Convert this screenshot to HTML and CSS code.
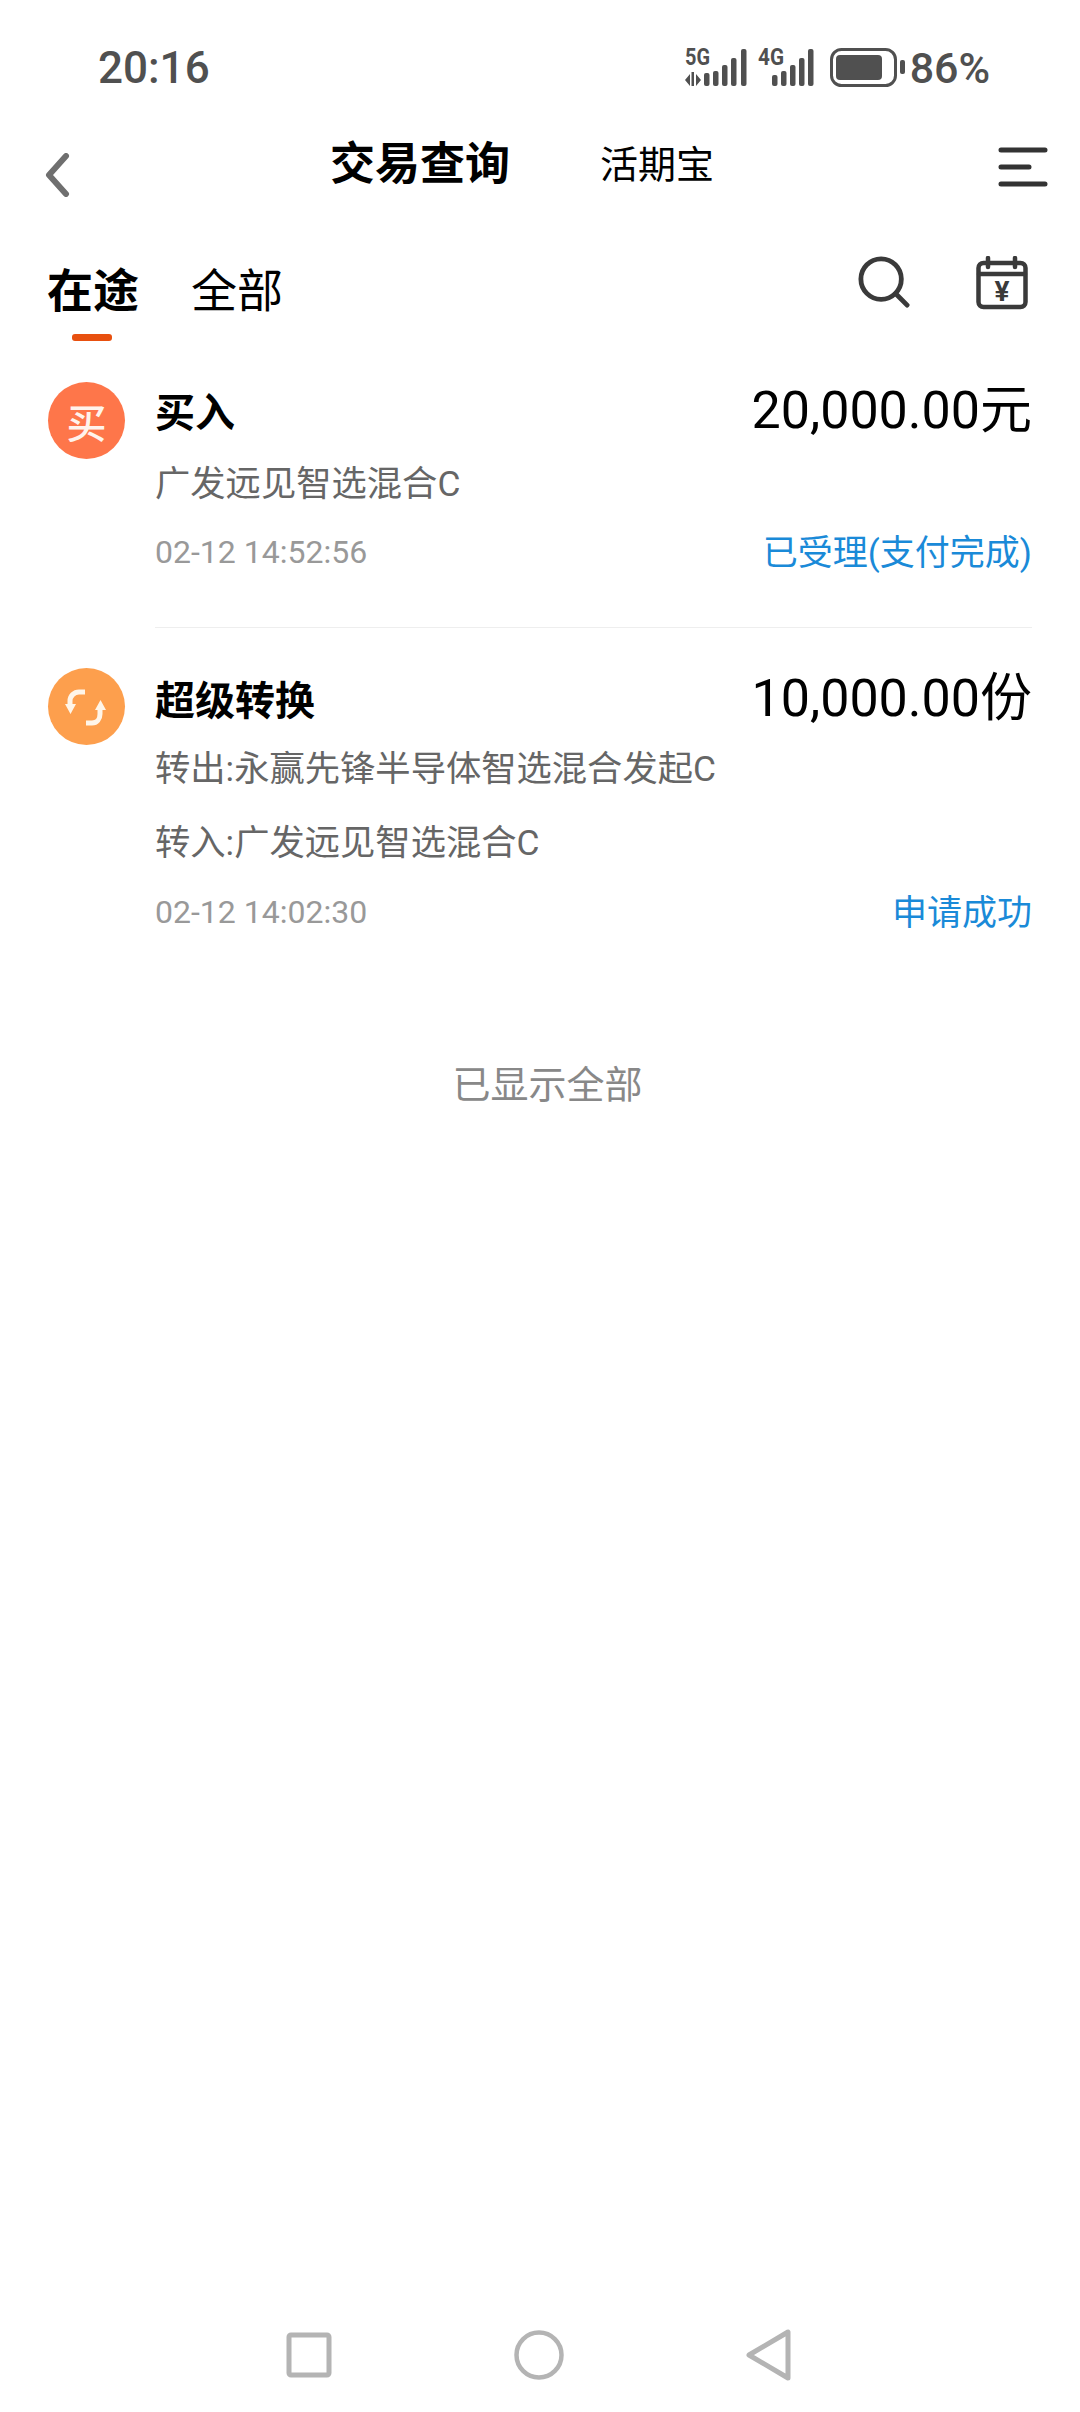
FILE: index.html
```html
<!DOCTYPE html>
<html lang="zh-CN">
<head>
    <meta charset="UTF-8">
    <meta name="viewport" content="width=device-width, initial-scale=1.0">
    <title>交易查询</title>
    <link rel="stylesheet" href="styles.css">
</head>
<body>
    <div class="status-bar">
        <span class="clock">20:16</span>
        <svg class="status-icons" width="220" height="46" viewBox="0 -6 220 46">
            <text x="0" y="17" class="net-label" textLength="25" lengthAdjust="spacingAndGlyphs">5G</text>
            <path d="M0 32l5-6v12zM6.500 24h2.500v14h-2.500zM11 26l5 6-5 6z" fill="#505050"/>
            <g fill="#505050">
                <rect x="19" y="25" width="5.500" height="13" rx="2"/>
                <rect x="28" y="23" width="5.500" height="15" rx="2"/>
                <rect x="37" y="17" width="5.500" height="21" rx="2"/>
                <rect x="46" y="10" width="5.500" height="28" rx="2"/>
                <rect x="56" y="1" width="5.500" height="37" rx="2"/>
            </g>
            <text x="73" y="17" class="net-label" textLength="26" lengthAdjust="spacingAndGlyphs">4G</text>
            <g fill="#505050">
                <rect x="87" y="27" width="5.500" height="11" rx="2"/>
                <rect x="96" y="23" width="5.500" height="15" rx="2"/>
                <rect x="105" y="17" width="5.500" height="21" rx="2"/>
                <rect x="114" y="10" width="5.500" height="28" rx="2"/>
                <rect x="123" y="1" width="5.500" height="37" rx="2"/>
            </g>
            <rect x="146.500" y="1.500" width="64" height="36" rx="10" fill="none" stroke="#505050" stroke-width="3"/>
            <rect x="151" y="7" width="46" height="25" rx="4" fill="#505050"/>
            <rect x="215" y="12" width="5" height="14" rx="2" fill="#505050"/>
        </svg>
        <span class="battery-level">86%</span>
    </div>

    <div class="nav-bar">
        <svg class="back-icon" width="26" height="44" viewBox="0 0 26 44">
            <path d="M21 3L4 22l17 19" fill="none" stroke="#6f6f6f" stroke-width="6" stroke-linecap="round" stroke-linejoin="round"/>
        </svg>
        <h1 class="nav-title">交易查询</h1>
        <span class="nav-link">活期宝</span>
        <svg class="menu-icon" width="50" height="42" viewBox="0 0 50 42">
            <path d="M3 4h44M3 21h28M3 38h44" fill="none" stroke="#333" stroke-width="5" stroke-linecap="round"/>
        </svg>
    </div>

    <div class="tabs">
        <span class="tab active">在途</span>
        <span class="tab">全部</span>
        <div class="tab-tools">
            <svg width="52" height="52" viewBox="0 0 54 54">
                <circle cx="24" cy="24" r="21" fill="none" stroke="#3a3a3a" stroke-width="5"/>
                <path d="M39 39l12 12" fill="none" stroke="#3a3a3a" stroke-width="5" stroke-linecap="round"/>
            </svg>
            <svg width="52" height="54" viewBox="0 0 52 54">
                <rect x="2.500" y="7" width="47" height="44" rx="5" fill="none" stroke="#3a3a3a" stroke-width="4.500"/>
                <path d="M3 18h46M12 2v9M39 2v9" fill="none" stroke="#3a3a3a" stroke-width="4.500" stroke-linecap="round"/>
                <text x="26" y="45" class="yen">¥</text>
            </svg>
        </div>
    </div>

    <div class="trade-list">
        <div class="trade first">
            <div class="trade-icon buy">买</div>
            <div class="trade-body">
                <div class="trade-head">
                    <span class="trade-name">买入</span>
                    <span class="trade-amount">20,000.00元</span>
                </div>
                <div class="trade-fund">广发远见智选混合C</div>
                <div class="trade-meta">
                    <span class="trade-time">02-12 14:52:56</span>
                    <span class="trade-state">已受理(支付完成)</span>
                </div>
            </div>
        </div>
        <div class="trade">
            <div class="trade-icon swap">
                <svg width="77" height="77" viewBox="0 0 77 77">
                    <path d="M37 24h-6c-5 0-9 4-9 9v4M38 55h6c5 0 8-4 8-9v-5" fill="none" stroke="#fff5e8" stroke-width="5"/>
                    <path d="M17 36h11l-5.500 10zM47 42h11l-5.500-10z" fill="#fff5e8"/>
                </svg>
            </div>
            <div class="trade-body">
                <div class="trade-head">
                    <span class="trade-name">超级转换</span>
                    <span class="trade-amount">10,000.00份</span>
                </div>
                <div class="trade-fund">转出:永赢先锋半导体智选混合发起C</div>
                <div class="trade-fund">转入:广发远见智选混合C</div>
                <div class="trade-meta">
                    <span class="trade-time">02-12 14:02:30</span>
                    <span class="trade-state">申请成功</span>
                </div>
            </div>
        </div>
    </div>

    <div class="end-note">已显示全部</div>

    <div class="system-nav">
        <svg width="46" height="46" viewBox="0 0 46 46">
            <rect x="3" y="3" width="40" height="40" rx="2" fill="none" stroke="#b4b4b4" stroke-width="5"/>
        </svg>
        <svg width="50" height="50" viewBox="0 0 50 50">
            <circle cx="25" cy="25" r="22.500" fill="none" stroke="#b4b4b4" stroke-width="4.500"/>
        </svg>
        <svg width="46" height="52" viewBox="0 0 46 52">
            <path d="M42 3v46L3 26z" fill="none" stroke="#b4b4b4" stroke-width="5" stroke-linejoin="round"/>
        </svg>
    </div>
</body>
</html>
```

FILE: styles.css
```css
body {
    margin: 0;
    width: 1080px;
    height: 2412px;
    display: flex;
    flex-direction: column;
    background-color: white;
    font-family: Roboto, "Noto Sans CJK SC", sans-serif;
    color: #000;
    overflow: hidden;
}

.status-bar {
    height: 120px;
    box-sizing: border-box;
    padding: 48px 0 0 98px;
    display: flex;
    align-items: flex-start;
    color: #505050;
}

.clock {
    font-size: 44px;
    font-weight: 500;
    line-height: 40px;
}

.status-icons {
    margin-left: 475px;
    margin-top: -6px;
    flex-shrink: 0;
}

.net-label {
    font-size: 24px;
    font-weight: 700;
    fill: #505050;
}

.battery-level {
    font-size: 43px;
    font-weight: 500;
    line-height: 40px;
    margin-left: 5px;
}

.nav-bar {
    height: 86px;
    display: flex;
    align-items: center;
    padding-left: 45px;
}

.back-icon {
    flex-shrink: 0;
    margin-top: 24px;
}

.nav-title {
    margin: 3px 0 0 259px;
    font-size: 45px;
    font-weight: 700;
    line-height: 60px;
}

.nav-link {
    margin-left: 90px;
    font-size: 38px;
    line-height: 60px;
    padding-top: 4px;
}

.menu-icon {
    margin-left: auto;
    margin-right: 32px;
    margin-top: 8px;
}

.tabs {
    height: 166px;
    box-sizing: border-box;
    padding: 3px 0 0 47px;
    display: flex;
    align-items: center;
}

.tab {
    position: relative;
    font-size: 46px;
    line-height: 60px;
    margin-right: 52px;
}

.tab.active {
    font-weight: 700;
}

.tab.active::after {
    content: "";
    position: absolute;
    left: 25px;
    bottom: -20px;
    width: 40px;
    height: 7px;
    border-radius: 3px;
    background-color: #e8500f;
}

.tab-tools {
    margin-left: auto;
    margin-right: 52px;
    display: flex;
    gap: 66px;
    margin-top: -15px;
}

.trade {
    display: flex;
    padding: 32px 48px 0 48px;
}

.trade.first {
    padding-top: 0;
}

.trade-icon {
    width: 77px;
    height: 77px;
    margin: 8px 30px 0 0;
    border-radius: 50%;
    flex-shrink: 0;
    display: flex;
    align-items: center;
    justify-content: center;
    font-size: 40px;
    font-weight: 500;
    color: #fff3ec;
}

.trade.first .trade-icon {
    margin-top: 10px;
}

.trade-icon.buy {
    background-color: #fe764a;
}

.trade-icon.swap {
    background-color: #fd9f4d;
}

.trade-body {
    flex: 1;
}

.trade.first .trade-body {
    border-bottom: 1px solid #eee;
    padding-bottom: 43px;
}

.trade-head,
.trade-meta {
    display: flex;
    justify-content: space-between;
    align-items: center;
}

.trade-head {
    height: 72px;
}

.trade.first .trade-head {
    margin-bottom: 3px;
}

.trade-name {
    font-size: 40px;
    font-weight: 700;
    padding-top: 3px;
}

.trade-amount {
    font-size: 52px;
    padding-bottom: 6px;
}

.trade-fund {
    font-size: 35.3px;
    line-height: 74px;
    color: #666;
}

.trade.first .trade-fund {
    margin-bottom: -1px;
}

.trade-meta {
    height: 64px;
}

.trade-time {
    font-size: 32px;
    color: #999;
}

.trade-state {
    font-size: 35px;
    color: #1a8ad8;
    padding-bottom: 6px;
}

.yen {
    font-size: 28px;
    font-weight: 700;
    fill: #3a3a3a;
    text-anchor: middle;
}

.end-note {
    margin-top: 118px;
    text-align: center;
    font-size: 38px;
    line-height: 46px;
    color: #888;
    padding-left: 15px;
}

.system-nav {
    margin-top: auto;
    height: 80px;
    margin-bottom: 17px;
    display: flex;
    align-items: center;
    padding-left: 286px;
    gap: 182px;
}
```
